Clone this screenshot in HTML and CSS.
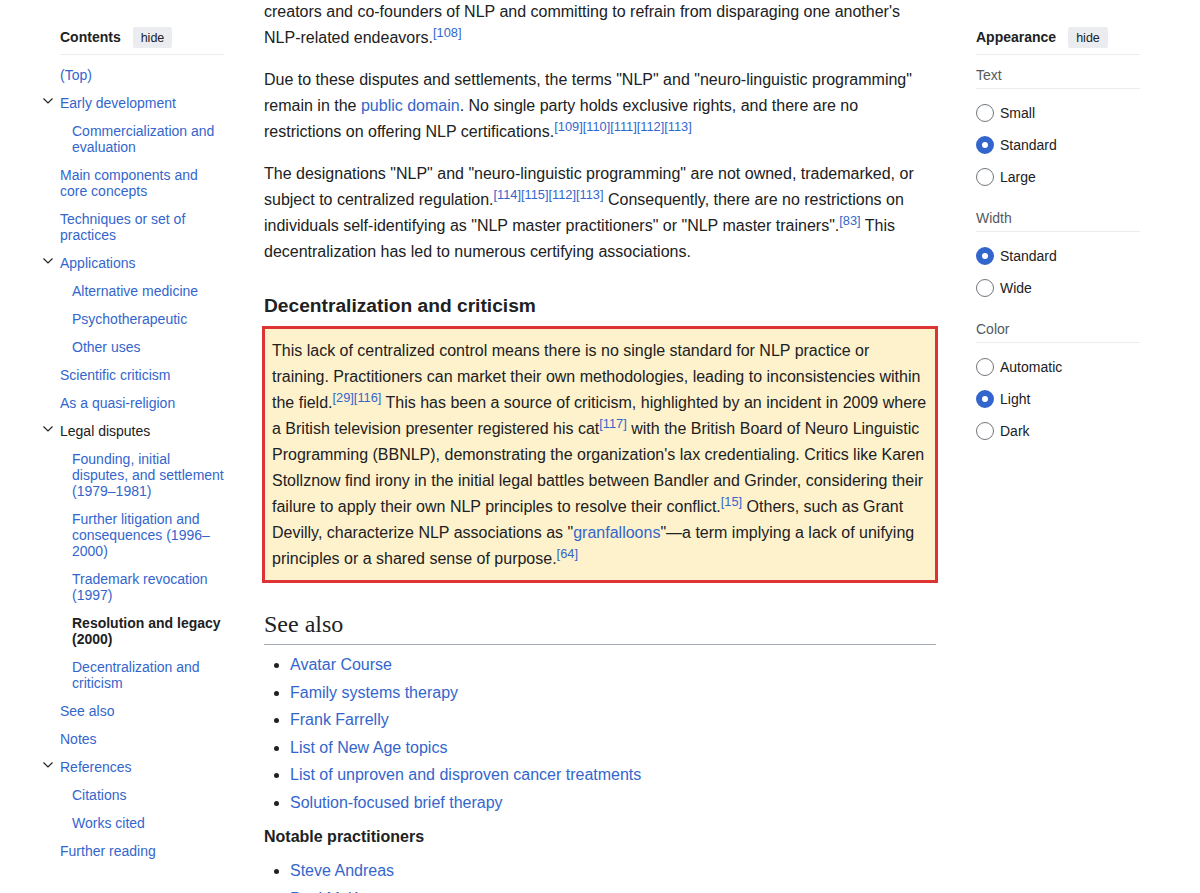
FILE: index.html
```html
<!DOCTYPE html>
<html lang="en">
  <head>
    <meta charset="UTF-8" />
    <title>Neuro-linguistic programming</title>
    <link rel="stylesheet" href="styles.css">
  </head>
  <body>
    <div class="page">
      <!-- table of contents -->
      <nav class="toc">
        <div class="panel-head">
          <span class="panel-title">Contents</span>
          <button class="hide-btn">hide</button>
        </div>
        <ul class="toc-list">
          <li><div class="toc-row"><a href="#">(Top)</a></div></li>
          <li>
            <div class="toc-row">
              <span class="toggle"><svg width="12" height="16" viewBox="0 0 12 16"><polyline points="1.5,3.5 6,8 10.5,3.5" /></svg></span>
              <a href="#">Early development</a>
            </div>
            <ul class="toc-sub">
              <li><div class="toc-row"><a href="#">Commercialization and evaluation</a></div></li>
            </ul>
          </li>
          <li><div class="toc-row"><a href="#">Main components and core concepts</a></div></li>
          <li><div class="toc-row"><a href="#">Techniques or set of practices</a></div></li>
          <li>
            <div class="toc-row">
              <span class="toggle"><svg width="12" height="16" viewBox="0 0 12 16"><polyline points="1.5,3.5 6,8 10.5,3.5" /></svg></span>
              <a href="#">Applications</a>
            </div>
            <ul class="toc-sub">
              <li><div class="toc-row"><a href="#">Alternative medicine</a></div></li>
              <li><div class="toc-row"><a href="#">Psychotherapeutic</a></div></li>
              <li><div class="toc-row"><a href="#">Other uses</a></div></li>
            </ul>
          </li>
          <li><div class="toc-row"><a href="#">Scientific criticism</a></div></li>
          <li><div class="toc-row"><a href="#">As a quasi-religion</a></div></li>
          <li>
            <div class="toc-row">
              <span class="toggle"><svg width="12" height="16" viewBox="0 0 12 16"><polyline points="1.5,3.5 6,8 10.5,3.5" /></svg></span>
              <a href="#" class="active">Legal disputes</a>
            </div>
            <ul class="toc-sub">
              <li><div class="toc-row"><a href="#">Founding, initial disputes, and settlement (1979–1981)</a></div></li>
              <li><div class="toc-row"><a href="#">Further litigation and consequences (1996–2000)</a></div></li>
              <li><div class="toc-row"><a href="#">Trademark revocation (1997)</a></div></li>
              <li><div class="toc-row"><a href="#" class="current">Resolution and legacy (2000)</a></div></li>
              <li><div class="toc-row"><a href="#">Decentralization and criticism</a></div></li>
            </ul>
          </li>
          <li><div class="toc-row"><a href="#">See also</a></div></li>
          <li><div class="toc-row"><a href="#">Notes</a></div></li>
          <li>
            <div class="toc-row">
              <span class="toggle"><svg width="12" height="16" viewBox="0 0 12 16"><polyline points="1.5,3.5 6,8 10.5,3.5" /></svg></span>
              <a href="#">References</a>
            </div>
            <ul class="toc-sub">
              <li><div class="toc-row"><a href="#">Citations</a></div></li>
              <li><div class="toc-row"><a href="#">Works cited</a></div></li>
            </ul>
          </li>
          <li><div class="toc-row"><a href="#">Further reading</a></div></li>
        </ul>
      </nav>

      <!-- article body -->
      <main class="content">
        <p class="first">
          creators and co-founders of NLP and committing to refrain from disparaging one another's
          NLP-related endeavors.<sup class="ref"><a href="#">[108]</a></sup>
        </p>
        <p>
          Due to these disputes and settlements, the terms "NLP" and "neuro-linguistic programming"
          remain in the <a href="#">public domain</a>. No single party holds exclusive rights, and there
          are no restrictions on offering NLP certifications.<sup class="ref"><a href="#">[109]</a><a href="#">[110]</a><a href="#">[111]</a><a href="#">[112]</a><a href="#">[113]</a></sup>
        </p>
        <p>
          The designations "NLP" and "neuro-linguistic programming" are not owned, trademarked, or
          subject to centralized regulation.<sup class="ref"><a href="#">[114]</a><a href="#">[115]</a><a href="#">[112]</a><a href="#">[113]</a></sup>
          Consequently, there are no restrictions on individuals self-identifying as "NLP master
          practitioners" or "NLP master trainers".<sup class="ref"><a href="#">[83]</a></sup> This
          decentralization has led to numerous certifying associations.
        </p>

        <h3 class="section">Decentralization and criticism</h3>
        <div class="highlight">
          <p>
            This lack of centralized control means there is no single standard for NLP practice or
            training. Practitioners can market their own methodologies, leading to inconsistencies
            within the field.<sup class="ref"><a href="#">[29]</a><a href="#">[116]</a></sup> This has
            been a source of criticism, highlighted by an incident in 2009 where a British television
            presenter registered his cat<sup class="ref"><a href="#">[117]</a></sup> with the British
            Board of Neuro Linguistic Programming (BBNLP), demonstrating the organization's lax
            credentialing. Critics like Karen Stollznow find irony in the initial legal battles
            between Bandler and Grinder, considering their failure to apply their own NLP principles
            to resolve their conflict.<sup class="ref"><a href="#">[15]</a></sup> Others, such as
            Grant Devilly, characterize NLP associations as "<a href="#">granfalloons</a>"—a term
            implying a lack of unifying principles or a shared sense of purpose.<sup class="ref"><a href="#">[64]</a></sup>
          </p>
        </div>

        <h2 class="see-also">See also</h2>
        <ul class="links">
          <li><a href="#">Avatar Course</a></li>
          <li><a href="#">Family systems therapy</a></li>
          <li><a href="#">Frank Farrelly</a></li>
          <li><a href="#">List of New Age topics</a></li>
          <li><a href="#">List of unproven and disproven cancer treatments</a></li>
          <li><a href="#">Solution-focused brief therapy</a></li>
        </ul>
        <div class="notable">Notable practitioners</div>
        <ul class="links practitioners">
          <li><a href="#">Steve Andreas</a></li>
          <li><a href="#">Paul McKenna</a></li>
        </ul>
      </main>

      <!-- appearance settings -->
      <aside class="appearance">
        <div class="panel-head">
          <span class="panel-title">Appearance</span>
          <button class="hide-btn">hide</button>
        </div>

        <div class="group group-first">
          <div class="group-label">Text</div>
          <label class="option"><input type="radio" name="text" /> Small</label>
          <label class="option"><input type="radio" name="text" checked /> Standard</label>
          <label class="option"><input type="radio" name="text" /> Large</label>
        </div>

        <div class="group">
          <div class="group-label">Width</div>
          <label class="option"><input type="radio" name="width" checked /> Standard</label>
          <label class="option"><input type="radio" name="width" /> Wide</label>
        </div>

        <div class="group">
          <div class="group-label">Color</div>
          <label class="option"><input type="radio" name="color" /> Automatic</label>
          <label class="option"><input type="radio" name="color" checked /> Light</label>
          <label class="option"><input type="radio" name="color" /> Dark</label>
        </div>
      </aside>
    </div>
  </body>
</html>
```

FILE: styles.css
```css
html,
body {
  margin: 0;
  padding: 0;
  overflow: hidden;
}

body {
  font-family: 'Liberation Sans', Arial, sans-serif;
  color: #202122;
  background: #fff;
}

a {
  color: #3366cc;
  text-decoration: none;
}

.page {
  display: grid;
  grid-template-columns: 164px 672px 164px;
  column-gap: 40px;
  padding-left: 60px;
  align-items: start;
}

/* sidebar headers */
.panel-head {
  display: flex;
  align-items: center;
  gap: 12px;
  padding-bottom: 6px;
  border-bottom: 1px solid #eaecf0;
}

.panel-title {
  font-size: 14px;
  font-weight: bold;
  line-height: 21px;
}

.hide-btn {
  height: 21px;
  padding: 0 8px;
  border: 0;
  border-radius: 2px;
  background: #eaecf0;
  color: #202122;
  font-family: 'Liberation Sans', Arial, sans-serif;
  font-size: 12.5px;
}

/* contents */
.toc {
  padding-top: 27px;
  font-size: 14px;
}

.toc ul {
  list-style: none;
  margin: 0;
  padding: 0;
}

.toc-list {
  margin-top: 6px !important;
}

.toc-row {
  display: flex;
  padding: 6px 0;
  line-height: 16px;
}

.toc-sub {
  padding-left: 12px !important;
}

.toggle {
  width: 18px;
  margin-left: -18px;
  flex: none;
}

.toggle svg {
  display: block;
  fill: none;
  stroke: #202122;
  stroke-width: 1.2;
}

.toc a.active {
  color: #202122;
}

.toc a.current {
  color: #202122;
  font-weight: bold;
}

/* article */
.content {
  font-size: 16px;
  line-height: 26px;
}

.content p {
  margin: 16px 0;
}

.content p.first {
  margin-top: -1px;
}

.ref {
  font-size: 12.8px;
  line-height: 1;
  vertical-align: super;
}

.section {
  font-size: 19.2px;
  line-height: 28px;
  font-weight: bold;
  margin: 16px 0 0;
  padding-top: 11px;
}

.highlight {
  margin: 6px -2px 0;
  padding: 9px 7px 8px;
  border: 3px solid #dd3333;
  background: #fef2cd;
}

.highlight p {
  margin: 0 !important;
}

.see-also {
  font-family: 'Liberation Serif', Georgia, serif;
  font-size: 24px;
  font-weight: normal;
  line-height: 33px;
  margin: 25px 0 0;
  padding-bottom: 3px;
  border-bottom: 1px solid #a2a9b1;
}

.links {
  margin: 7px 0 0;
  padding-left: 26px;
}

.links li {
  margin-bottom: 1.6px;
}

.notable {
  font-weight: bold;
  margin-top: 8px;
}

.practitioners {
  margin-top: 8px;
}

/* appearance */
.appearance {
  padding-top: 27px;
  font-size: 14px;
}

.group {
  margin-top: 15px;
}

.group-first {
  margin-top: 10px;
}

.group-label {
  color: #54595d;
  line-height: 20px;
  padding-bottom: 3px;
  border-bottom: 1px solid #eaecf0;
  margin-bottom: 8px;
}

.option {
  display: flex;
  align-items: center;
  gap: 6px;
  height: 32px;
}

.option input {
  appearance: none;
  width: 18px;
  height: 18px;
  margin: 0;
  border: 1px solid #72777d;
  border-radius: 50%;
  background: #fff;
}

.option input:checked {
  border: 6px solid #3366cc;
}
```
